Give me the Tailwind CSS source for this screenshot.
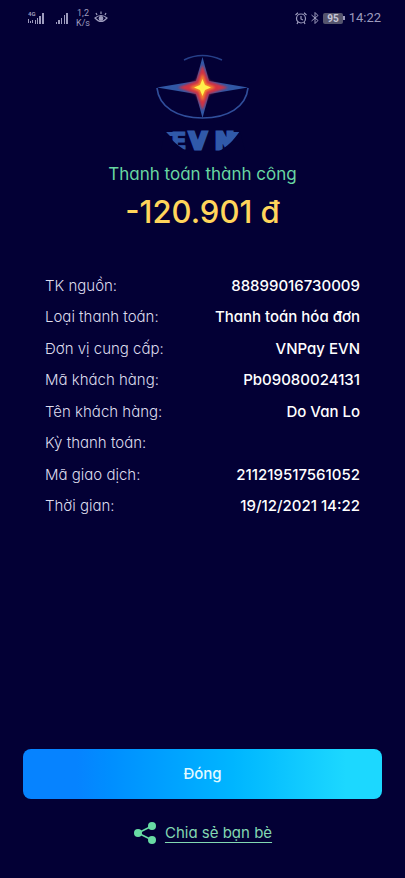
<!DOCTYPE html>
<html lang="vi">
<head>
<meta charset="utf-8">
<meta name="viewport" content="width=device-width, initial-scale=1">
<title>Thanh toán thành công</title>
<script src="https://cdn.jsdelivr.net/npm/@tailwindcss/browser@4"></script>
</head>
<body class="bg-[#030035] font-['Inter','Noto_Sans',sans-serif] [font-feature-settings:'cv11'] text-white">
<div class="flex min-h-screen flex-col">
  <header class="flex h-9 items-center justify-between pr-6 pl-7 font-['Roboto',sans-serif] text-[#9d9bbd]">
    <div class="flex items-center">
      <svg class="h-4 w-4" viewBox="0 0 16 16" fill="currentColor" aria-hidden="true">
        <text x="0" y="6" font-size="6" font-weight="700">4G</text>
        <path d="M0 9h1v4H0zM2 11h1v2H2zM4 10h1v3H4zM7 10h1v4H7zM9 8h1v6H9zM11 6h2v8h-2zM14 3h2v11h-2z"/>
      </svg>
      <svg class="ml-3 h-4 w-3" viewBox="0 0 12 16" fill="currentColor" aria-hidden="true"><path d="M0 12h1v2H0zM2 10h2v4H2zM5 8h1v6H5zM8 5h1v9H8zM10 3h2v11h-2z"/></svg>
      <div class="ml-2 flex flex-col items-center text-[9px] leading-[10px]"><span>1,2</span><span>K/s</span></div>
      <svg class="ml-1 h-4 w-3.5" viewBox="0 0 12 16" fill="none" stroke="currentColor" stroke-width="1.2" aria-hidden="true"><path d="M0 8Q6 3 12 8Q6 15 0 8ZM2 5L1 3M6 4V1.5M10 5l1-2"/><circle cx="6" cy="8.5" r="1.8" fill="currentColor"/></svg>
    </div>
    <div class="flex items-center">
      <svg class="h-4 w-3" viewBox="0 0 12 16" fill="none" stroke="currentColor" stroke-width="1.2" aria-hidden="true"><circle cx="6" cy="8.5" r="4.5"/><path d="M6 6v3l2 1M.5 5L3 2.8M11.5 5L9 2.8M3 12l-1 2M9 12l1 2"/></svg>
      <svg class="ml-1 h-4 w-2" viewBox="0 0 8 16" fill="none" stroke="currentColor" stroke-width="1" aria-hidden="true"><path d="M.5 5L7 10.5L4 13.5V2.5L7 5.5L.5 11"/></svg>
      <span class="ml-1 rounded-xs bg-[#55546d] px-1 text-[10px] leading-[11px] font-bold text-[#c5c4d8]">95</span>
      <span class="h-1 w-0.5 bg-[#9d9bbd]"></span>
      <time class="ml-1 text-[13px]">14:22</time>
    </div>
  </header>

  <main class="flex flex-1 flex-col">
    <svg class="mx-auto mt-4 h-[100px] w-[100px] shrink-0" viewBox="0 0 100 100" role="img" aria-label="EVN">
      <defs>
        <filter id="soft" x="-20%" y="-20%" width="140%" height="140%"><feGaussianBlur stdDeviation=".8"/></filter>
      </defs>
      <path d="M31 8Q49-1 69 8" fill="none" stroke="#263f89" stroke-width="1.4"/>
      <path d="M4 36C6 55 24 66 49.500 66S93 55 95 36" fill="none" stroke="#304e9b" stroke-width="1.7"/>
      <path d="M49.500 5L56 29L95 35.500L56 42L49.500 66L43 42L4 35.500L43 29Z" fill="#3157a5"/>
      <g filter="url(#soft)">
        <path d="M49.500 13L56 29L75 35.500L56 42L49.500 58L43 42L25 35.500L43 29Z" fill="#d33242"/>
        <path d="M49.500 22L53 32L62 35.500L53 39L49.500 49L46 39L37 35.500L46 32Z" fill="#fb8b27"/>
      </g>
      <path d="M49.500 27L52 33L58 35.500L52 38L49.500 44L47 38L41 35.500L47 33Z" fill="#fff04c"/>
      <g fill="#3059a9" stroke="#3059a9" font-family="DejaVu Sans" font-weight="700" font-size="23">
        <text x="18" y="97" stroke-width="1">E</text><text x="36" y="97" stroke-width="3">V</text><text x="62" y="97" stroke-width="3">N</text>
      </g>
      <path d="M13 80H24V84H17ZM78 80H87L83 88H78Z" fill="#3059a9"/>
      <path d="M12 79C19 89 26 95 34 99H8ZM87 79C80 89 74 95 66 99H92Z" fill="#030035"/>
    </svg>
    <h1 class="mt-2 text-center text-[17px] leading-7 text-[#68d7a2]">Thanh toán thành công</h1>
    <p class="text-center text-[31px] leading-[48px] font-medium text-[#ffd55b]">-120.901 đ</p>

    <dl class="mx-[45px] mt-[34px] grid min-h-[252px] auto-rows-fr text-[15px] leading-5">
      <div class="flex items-center justify-between"><dt class="font-light text-[#dddced]">TK nguồn:</dt><dd class="font-medium">88899016730009</dd></div>
      <div class="flex items-center justify-between"><dt class="font-light text-[#dddced]">Loại thanh toán:</dt><dd class="font-medium">Thanh toán hóa đơn</dd></div>
      <div class="flex items-center justify-between"><dt class="font-light text-[#dddced]">Đơn vị cung cấp:</dt><dd class="font-medium">VNPay EVN</dd></div>
      <div class="flex items-center justify-between"><dt class="font-light text-[#dddced]">Mã khách hàng:</dt><dd class="font-medium">Pb09080024131</dd></div>
      <div class="flex items-center justify-between"><dt class="font-light text-[#dddced]">Tên khách hàng:</dt><dd class="font-medium">Do Van Lo</dd></div>
      <div class="flex items-center justify-between"><dt class="font-light text-[#dddced]">Kỳ thanh toán:</dt><dd class="font-medium"></dd></div>
      <div class="flex items-center justify-between"><dt class="font-light text-[#dddced]">Mã giao dịch:</dt><dd class="font-medium">211219517561052</dd></div>
      <div class="flex items-center justify-between"><dt class="font-light text-[#dddced]">Thời gian:</dt><dd class="font-medium">19/12/2021 14:22</dd></div>
    </dl>
  </main>

  <footer class="flex flex-col items-center px-[23px] pb-[31px]">
    <button type="button" class="h-[50px] w-full rounded-lg bg-linear-to-r from-[#0683ff] from-15% to-[#1cd8ff] to-90% text-[15px] font-medium text-[#e2faff]">Đóng</button>
    <a href="#" class="mt-5 flex items-center gap-2 text-[15px] leading-7 text-[#82d8b2]">
      <svg class="h-6 w-6" viewBox="0 0 24 24" fill="#68dba4" stroke="#68dba4" aria-hidden="true"><path d="M19 5L5 12L19 19" fill="none" stroke-width="1.6"/><circle cx="19" cy="5" r="4" stroke="none"/><circle cx="5" cy="12" r="4" stroke="none"/><circle cx="19" cy="19" r="4" stroke="none"/></svg>
      <span class="underline underline-offset-4 [text-decoration-skip-ink:none]">Chia sẻ bạn bè</span>
    </a>
  </footer>
</div>
</body>
</html>
